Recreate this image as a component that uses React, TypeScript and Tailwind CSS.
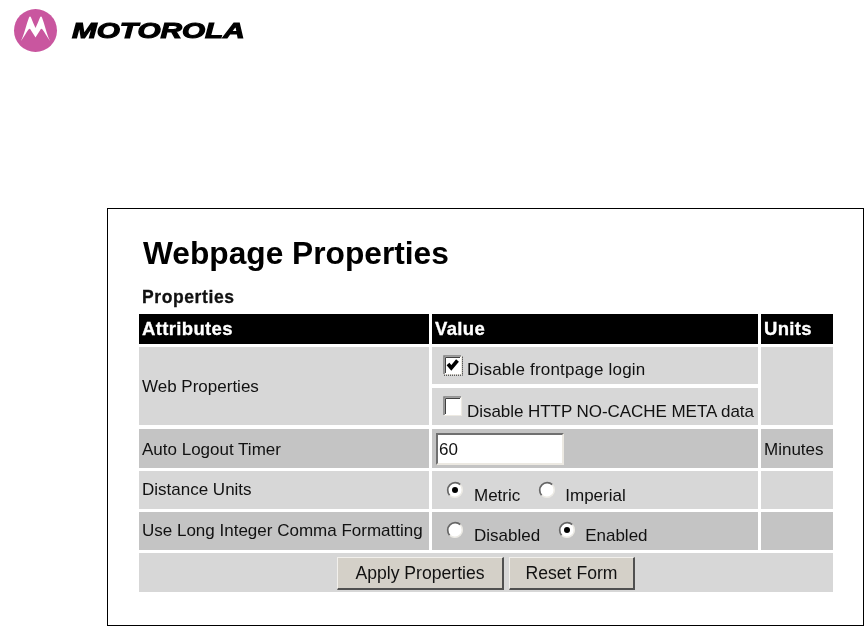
import React from "react";

const F = "font-['Liberation_Sans',Arial,sans-serif]";

function Check({ checked, focus }: { checked?: boolean; focus?: boolean }) {
  return (
    <svg width="20" height="21" viewBox="0 0 20 21" className="shrink-0 block">
      <rect x="1" y="1" width="17" height="18" fill="#fff" />
      <path d="M1 19V1H18" fill="none" stroke="#808080" strokeWidth="1.6" />
      <path d="M2.5 18V2.500H17" fill="none" stroke="#404040" strokeWidth="1" />
      <path d="M18.500 1V19.500H1" fill="none" stroke="#ece9e2" strokeWidth="1.200" />
      {checked && <path d="M5 9L8.300 13L14.500 5.500" fill="none" stroke="#000" strokeWidth="3.600" />}
      {focus && <path d="M1 20.200H19.500V1" fill="none" stroke="#222" strokeWidth="1" strokeDasharray="1 1" />}
    </svg>
  );
}

function Radio({ checked }: { checked?: boolean }) {
  return (
    <svg width="18" height="18" viewBox="0 0 18 18" className="shrink-0 block">
      <circle cx="9" cy="9" r="7.500" fill="#fff" />
      <path d="M3.700 14.300A7.500 7.500 0 0 1 14.300 3.700" fill="none" stroke="#666" strokeWidth="1.700" />
      <path d="M14.300 3.700A7.500 7.500 0 0 1 3.700 14.300" fill="none" stroke="#eceae4" strokeWidth="1.500" />
      {checked && <circle cx="9" cy="9" r="3" fill="#000" />}
    </svg>
  );
}

function Head({ children }: { children: React.ReactNode }) {
  return <div className="bg-black text-white font-bold text-[18.5px] tracking-[0.35px] leading-none pl-[3px] pt-[6px] [-webkit-text-stroke:0.3px_white]">{children}</div>;
}

function Btn({ children, w }: { children: React.ReactNode; w: string }) {
  return (
    <button className={`${w} h-[33px] pt-[1px] bg-[#d4d0c8] text-[#111] text-[17.6px] leading-none border border-t-[#f2f0ec] border-l-[#f2f0ec] border-r-[#505050] border-b-[#505050] border-b-2 border-r-2`}>
      {children}
    </button>
  );
}

export default function App() {
  return (
    <div className={`${F} w-[866px] h-[626px] bg-white text-[#111] overflow-hidden blur-[0.35px]`}>
      <header className="h-[208px] pl-[13px] pt-[8px] flex items-start">
        <svg width="45" height="45" viewBox="0 0 45 45" className="shrink-0">
          <circle cx="22.500" cy="22.500" r="21.500" fill="#c9569f" />
          <path d="M8 33C11 27 13.500 16 16 9.500C16.500 8 17.500 8 18 9.500C19.500 13 21 17 22.500 20C24 17 25.500 13 27 9.500C27.500 8 28.500 8 29 9.500C31.500 16 34 27 37 33C34 29 31.500 24 29.500 21.500C28.500 20.500 28 20.500 27.500 21.500C26 24 24 27 22.500 29.500C21 27 19 24 17.500 21.500C17 20.500 16.500 20.500 15.500 21.500C13.500 24 11 29 8 33Z" fill="#fff" />
        </svg>
        <span className="ml-[14px] mt-[11px] inline-block origin-left scale-x-[1.35] text-[22px] leading-[24px] font-bold italic text-black [-webkit-text-stroke:1.1px_black]">MOTOROLA</span>
      </header>
      <section className="ml-[107px] w-[757px] h-[418px] border border-black pl-[31px] pt-[27px]">
        <h1 className="ml-[4px] text-[31.7px] leading-[34px] font-bold text-black">Webpage Properties</h1>
        <h2 className="ml-[3px] mt-[18px] text-[17.5px] tracking-[0.6px] leading-[18px] font-bold [-webkit-text-stroke:0.3px_#111]">Properties</h2>
        <div className="mt-[8px] w-[694px] grid grid-cols-[290px_326px_72px] grid-rows-[30px_37px_39px_39px_38px_38px_39px] gap-[3px] text-[17px] leading-none">
          <Head>Attributes</Head>
          <Head>Value</Head>
          <Head>Units</Head>

          <div className="row-span-2 mb-px bg-[#d7d7d7] flex items-center pl-[3px]">Web Properties</div>
          <div className="bg-[#d7d7d7] flex items-center pl-[11px]">
            <Check checked focus />
            <span className="ml-[4px] mt-[8px] tracking-[0.2px]">Disable frontpage login</span>
          </div>
          <div className="row-span-2 mb-px bg-[#d7d7d7]"></div>
          <div className="my-px bg-[#d7d7d7] flex items-center pl-[11px]">
            <Check />
            <span className="ml-[4px] mt-[9px] tracking-[-0.05px]">Disable HTTP NO-CACHE META data</span>
          </div>

          <div className="bg-[#c4c4c4] flex items-center pl-[3px] pt-[1px]">Auto Logout Timer</div>
          <div className="bg-[#c4c4c4] flex items-center pl-[4px]">
            <div className="w-[128px] h-[32px] bg-white border-2 border-t-[#707070] border-l-[#707070] border-r-[#ece9e2] border-b-[#ece9e2] flex items-center pl-[1px] pt-[1px]">60</div>
          </div>
          <div className="bg-[#c4c4c4] flex items-center pl-[3px] pt-[1px]">Minutes</div>

          <div className="bg-[#d7d7d7] flex items-center pl-[3px] pb-[1px]">Distance Units</div>
          <div className="bg-[#d7d7d7] flex items-start pl-[14px] pt-[10px]">
            <Radio checked />
            <span className="ml-[10px] mt-[6px]">Metric</span>
            <span className="ml-[18px]"><Radio /></span>
            <span className="ml-[9px] mt-[6px]">Imperial</span>
          </div>
          <div className="bg-[#d7d7d7]"></div>

          <div className="bg-[#c4c4c4] flex items-center pl-[3px] pb-[1px]">Use Long Integer Comma Formatting</div>
          <div className="bg-[#c4c4c4] flex items-start pl-[14px] pt-[9px]">
            <Radio />
            <span className="ml-[10px] mt-[6px]">Disabled</span>
            <span className="ml-[18px]"><Radio checked /></span>
            <span className="ml-[9px] mt-[6px]">Enabled</span>
          </div>
          <div className="bg-[#c4c4c4]"></div>

          <div className="col-span-3 bg-[#d7d7d7] flex justify-center gap-[5px] pt-[4px]">
            <Btn w="w-[167px]">Apply Properties</Btn>
            <Btn w="w-[126px]">Reset Form</Btn>
          </div>
        </div>
      </section>
    </div>
  );
}
